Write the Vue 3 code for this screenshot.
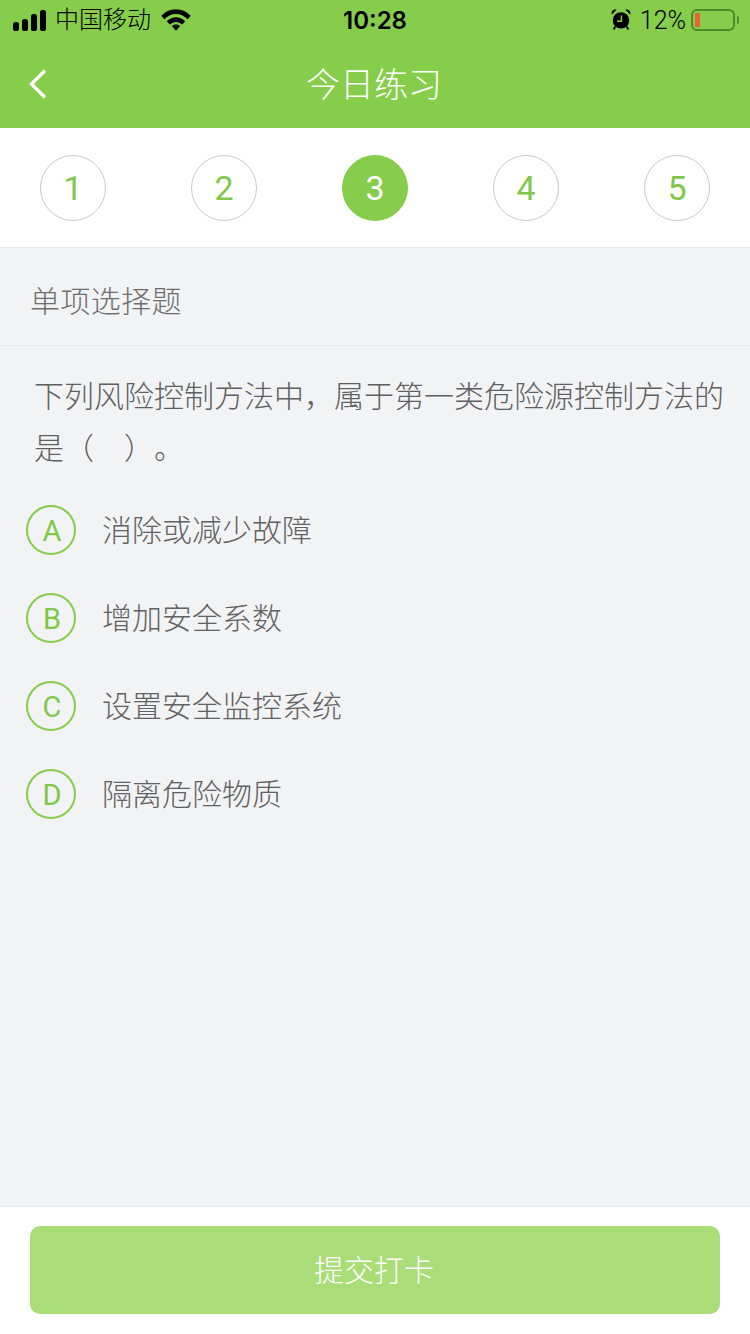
<template>
  <div class="page">
    <header class="top">
      <div class="status">
        <div class="status-left">
          <svg class="signal" width="33" height="21" viewBox="0 0 33 21">
            <rect x="0" y="12" width="6" height="9" rx="2.6" />
            <rect x="9" y="9" width="6" height="12" rx="2.6" />
            <rect x="18" y="4" width="6" height="17" rx="2.6" />
            <rect x="27" y="0" width="6" height="21" rx="2.6" />
          </svg>
          <span class="carrier">中国移动</span>
          <svg class="wifi" width="30" height="22" viewBox="0 0 30 22">
            <path d="M0.3 6.7C8.3 -1.9 21.7 -1.9 29.7 6.7L26.6 10.2C20 3.2 10 3.2 3.4 10.2Z" />
            <path d="M5.8 12.3C11 6.8 19 6.8 24.2 12.3L21.2 15.6C17.4 12 12.6 12 8.8 15.6Z" />
            <path d="M10.8 17C13.2 14.9 16.8 14.9 19.2 17L15 21.8Z" />
          </svg>
        </div>
        <span class="time">10:28</span>
        <div class="status-right">
          <svg class="alarm" width="20" height="21" viewBox="0 0 20 21">
            <circle cx="10" cy="11.4" r="8.2" />
            <path d="M0.8 5.6C-0.2 2.4 2.4 -0.2 5.6 0.8Z" />
            <path d="M19.2 5.6C20.2 2.4 17.6 -0.2 14.4 0.8Z" />
            <path d="M4.4 17.6L2.6 20.4M15.6 17.6L17.4 20.4" stroke="#000" stroke-width="1.8" />
            <path d="M10.4 6.4V12.2H6" fill="none" stroke="#86cd4b" stroke-width="1.5" />
          </svg>
          <span class="percent">12%</span>
          <div class="battery"><i class="level"></i></div>
          <i class="battery-cap"></i>
        </div>
      </div>
      <div class="nav">
        <svg class="back" width="20" height="32" viewBox="0 0 20 32">
          <path d="M17 2.5L3.5 16L17 29.5" fill="none" stroke="#fff" stroke-width="3.4" />
        </svg>
        <span class="nav-title">今日练习</span>
      </div>
    </header>

    <div class="steps">
      <div
        v-for="n in steps"
        :key="n"
        class="step"
        :class="{ active: n === current }"
      >
        {{ n }}
      </div>
    </div>

    <main class="content">
      <div class="type">单项选择题</div>
      <p class="question">下列风险控制方法中，属于第一类危险源控制方法的是（　）。</p>
      <ul class="options">
        <li v-for="item in options" :key="item.key" class="option">
          <span class="letter">{{ item.key }}</span>
          <span class="label">{{ item.text }}</span>
        </li>
      </ul>
    </main>

    <footer class="bottom">
      <button class="submit"><span>提交打卡</span></button>
    </footer>
  </div>
</template>

<script setup>
const steps = [1, 2, 3, 4, 5];
const current = 3;

const options = [
  { key: 'A', text: '消除或减少故障' },
  { key: 'B', text: '增加安全系数' },
  { key: 'C', text: '设置安全监控系统' },
  { key: 'D', text: '隔离危险物质' },
];
</script>

<style>
html,
body {
  margin: 0;
  background: #f2f3f5;
}
</style>

<style scoped>
.page {
  width: 750px;
  height: 1334px;
  display: flex;
  flex-direction: column;
  overflow: hidden;
  background: #f2f3f5;
  font-family: "Liberation Sans", "Noto Sans CJK SC", sans-serif;
  text-spacing-trim: space-all;
  font-weight: 300;
}

.top {
  height: 128px;
  background: #86cd4b;
  flex-shrink: 0;
}

.status {
  height: 40px;
  display: flex;
  align-items: center;
  justify-content: space-between;
  position: relative;
  color: #000;
}

.status-left {
  display: flex;
  align-items: center;
  padding-left: 13px;
}

.signal {
  fill: #000;
}

.carrier {
  font-size: 24px;
  line-height: 40px;
  margin-left: 9px;
  margin-top: -1px;
}

.wifi {
  fill: #000;
  margin-left: 10px;
}

.time {
  position: absolute;
  left: 0;
  right: 0;
  text-align: center;
  font-family: Inter, "Liberation Sans", sans-serif;
  font-size: 24px;
  font-weight: 600;
}

.status-right {
  display: flex;
  align-items: center;
  padding-right: 11px;
}

.alarm {
  fill: #000;
  margin-top: -2px;
}

.percent {
  font-family: Roboto, "Liberation Sans", sans-serif;
  font-size: 25px;
  font-weight: 300;
  margin-left: 9px;
}

.battery {
  width: 44px;
  height: 22px;
  box-sizing: border-box;
  margin-left: 5px;
  border: 2px solid #4f8a2a;
  border-radius: 6px;
  display: flex;
  align-items: center;
  padding-left: 2px;
}

.level {
  width: 5px;
  height: 14px;
  background: #e8623a;
  border-radius: 1px;
}

.battery-cap {
  width: 2px;
  height: 8px;
  margin-left: 2px;
  background: #4f8a2a;
  border-radius: 0 2px 2px 0;
}

.nav {
  height: 88px;
  display: flex;
  align-items: center;
  justify-content: center;
  position: relative;
}

.back {
  position: absolute;
  left: 28px;
  top: 28px;
}

.nav-title {
  color: #fff;
  font-size: 34px;
  margin-top: -3px;
  margin-right: 2px;
}

.steps {
  height: 119px;
  flex-shrink: 0;
  background: #fff;
  border-bottom: 1px solid #e8e9eb;
  display: flex;
  align-items: center;
  justify-content: space-between;
  padding: 0 40px;
}

.step {
  width: 66px;
  height: 66px;
  box-sizing: border-box;
  border: 1px solid #c9c9c9;
  border-radius: 50%;
  display: flex;
  align-items: center;
  justify-content: center;
  color: #7fc84a;
  font-family: Roboto, "Liberation Sans", sans-serif;
  font-size: 34px;
  font-weight: 400;
  margin-top: 1px;
}

.step.active {
  background: #86cd4b;
  border-color: #86cd4b;
  color: #fff;
}

.content {
  flex: 1;
  min-height: 0;
}

.type {
  height: 98px;
  box-sizing: border-box;
  border-bottom: 1px solid #e9eaec;
  padding-left: 30px;
  padding-top: 5px;
  line-height: 97px;
  font-size: 30px;
  letter-spacing: 0.4px;
  color: #6f6f6f;
}

.question {
  margin: 0;
  padding: 25px 20px 0 34px;
  font-size: 30px;
  line-height: 52px;
  color: #5f5f5f;
}

.options {
  list-style: none;
  margin: 0;
  padding: 11px 0 0 26px;
}

.option {
  height: 88px;
  display: flex;
  align-items: center;
}

.letter {
  width: 50px;
  height: 50px;
  box-sizing: border-box;
  border: 2px solid #86cd4b;
  border-radius: 50%;
  display: flex;
  align-items: center;
  justify-content: center;
  color: #7fc84a;
  font-family: Roboto, "Liberation Sans", sans-serif;
  font-size: 29px;
  font-weight: 400;
  padding: 2px 0 0 2px;
}

.label {
  margin-left: 26px;
  font-size: 30px;
  color: #616161;
  margin-top: -4px;
}

.bottom {
  height: 128px;
  flex-shrink: 0;
  box-sizing: border-box;
  background: #fff;
  border-top: 1px solid #e8e9eb;
  padding: 19px 30px 0;
}

.submit {
  display: flex;
  align-items: center;
  justify-content: center;
  width: 100%;
  height: 88px;
  border: 0;
  border-radius: 10px;
  background: #aadc78;
  color: #fff;
  font-family: inherit;
  font-size: 30px;
  font-weight: 300;
}

.submit span {
  margin: -4px 2px 0 0;
}
</style>
